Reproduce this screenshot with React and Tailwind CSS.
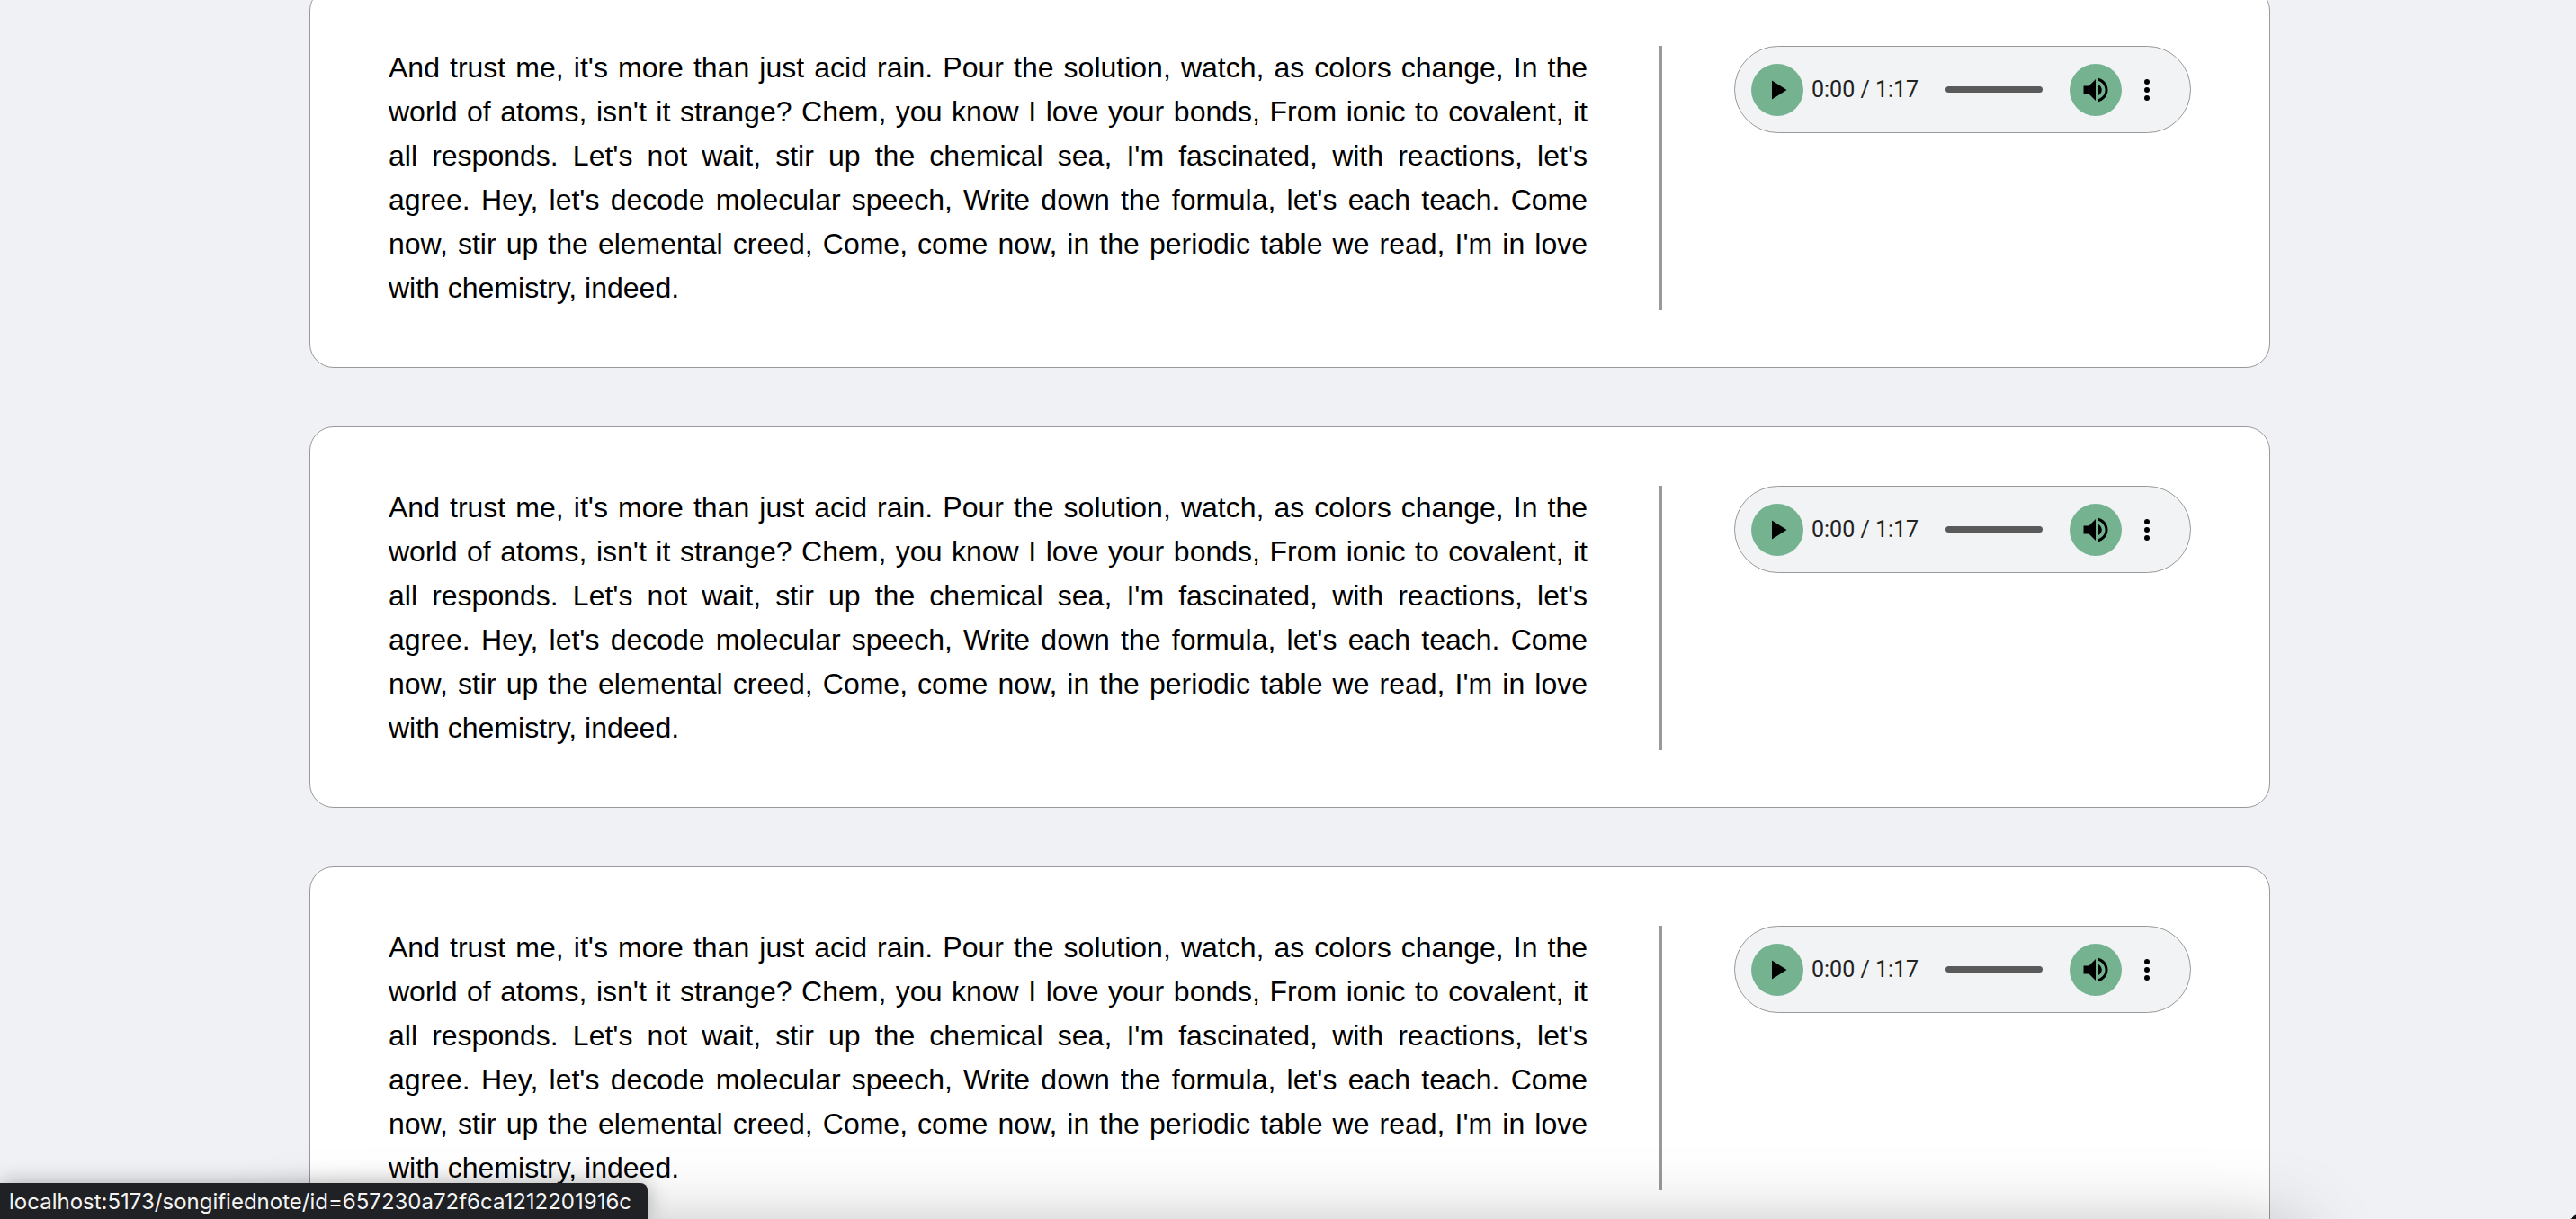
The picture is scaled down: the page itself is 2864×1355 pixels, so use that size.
import React, { useState } from "react";

const lyrics =
  "And trust me, it's more than just acid rain. Pour the solution, watch, as colors change, In the world of atoms, isn't it strange? Chem, you know I love your bonds, From ionic to covalent, it all responds. Let's not wait, stir up the chemical sea, I'm fascinated, with reactions, let's agree.\u00a0Hey, let's decode molecular speech, Write down the formula, let's each teach. Come now, stir up the elemental creed, Come, come now, in the periodic table we read, I'm in love with\u00a0chemistry, indeed.";

const notes = [
  { id: "note-1", text: lyrics, duration: "1:17" },
  { id: "note-2", text: lyrics, duration: "1:17" },
  { id: "note-3", text: lyrics, duration: "1:17" },
];

function Icon({ children }) {
  return (
    <svg viewBox="0 0 24 24" className="size-9" fill="currentColor" aria-hidden="true">
      {children}
    </svg>
  );
}

function AudioPlayer({ duration }) {
  const [position, setPosition] = useState(0);
  return (
    <div className="flex h-[97px] w-[508px] shrink-0 items-center rounded-full border border-[#999] bg-[#f1f3f5] pl-[18px] text-black">
      <button
        type="button"
        aria-label="Play"
        className="flex size-[58px] shrink-0 items-center justify-center rounded-full bg-[#74b290]"
      >
        <Icon>
          <path d="M8 5v14l11-7z" />
        </Icon>
      </button>
      <span className="ml-[9px] shrink-0 font-[Roboto,sans-serif] text-[25px] leading-8 text-[#222]">
        0:00 / {duration}
      </span>
      <input
        type="range"
        aria-label="Seek"
        min="0"
        max="77"
        value={position}
        onChange={(e) => setPosition(Number(e.target.value))}
        className="mx-[30px] h-[7px] min-w-0 flex-1 appearance-none rounded-full bg-[#5a5a5a] [&::-webkit-slider-thumb]:size-0 [&::-webkit-slider-thumb]:appearance-none"
      />
      <button
        type="button"
        aria-label="Mute"
        className="flex size-[58px] shrink-0 items-center justify-center rounded-full bg-[#74b290]"
      >
        <Icon>
          <path d="M3 9v6h4l5 5V4L7 9H3zm13.500 3c0-1.770-1.020-3.290-2.500-4.030v8.050c1.480-.73 2.500-2.250 2.500-4.020zM14 3.230v2.060c2.890.86 5 3.540 5 6.710s-2.110 5.850-5 6.710v2.060c4.010-.91 7-4.490 7-8.770s-2.990-7.860-7-8.770z" />
        </Icon>
      </button>
      <button type="button" aria-label="More options" className="mr-[30px] ml-[10px] shrink-0">
        <Icon>
          <circle cx="12" cy="6" r="2" />
          <circle cx="12" cy="12" r="2" />
          <circle cx="12" cy="18" r="2" />
        </Icon>
      </button>
    </div>
  );
}

function NoteCard({ note }) {
  return (
    <article className="flex items-stretch gap-20 rounded-[27px] border border-[#999] bg-white px-[87px] pt-[65px] pb-[63px]">
      <p className="min-w-0 flex-1 text-justify text-[32px] leading-[49px] text-black">{note.text}</p>
      <div className="w-[3px] shrink-0 bg-[#999]" />
      <AudioPlayer duration={note.duration} />
    </article>
  );
}

export default function App() {
  return (
    <div className="relative h-screen overflow-hidden bg-[#f0f1f5] font-['Liberation_Sans',Arial,sans-serif]">
      <main className="-mt-[15px] flex flex-col gap-[65px] pr-[340px] pl-[344px]">
        {notes.map((note) => (
          <NoteCard key={note.id} note={note} />
        ))}
      </main>

      <div className="pointer-events-none absolute right-[314px] -bottom-[260px] left-[314px] h-60 shadow-[0_0_90px_rgba(0,0,0,0.36)]" />
      <div className="absolute bottom-0 left-0 flex h-10 items-center rounded-tr-lg bg-[#202124] pt-0.5 pr-[18px] pl-[10px] font-[Inter,sans-serif] text-2xl text-[#f4f4f4] shadow-[0_0_24px_rgba(0,0,0,0.3)]">
        localhost:5173/songifiednote/id=657230a72f6ca1212201916c
      </div>
      <svg viewBox="0 0 8 8" className="absolute right-0 bottom-0 size-2" aria-hidden="true">
        <path d="M8 2C6.500 4.500 4 7 1 8h7z" fill="#111" />
      </svg>
    </div>
  );
}
